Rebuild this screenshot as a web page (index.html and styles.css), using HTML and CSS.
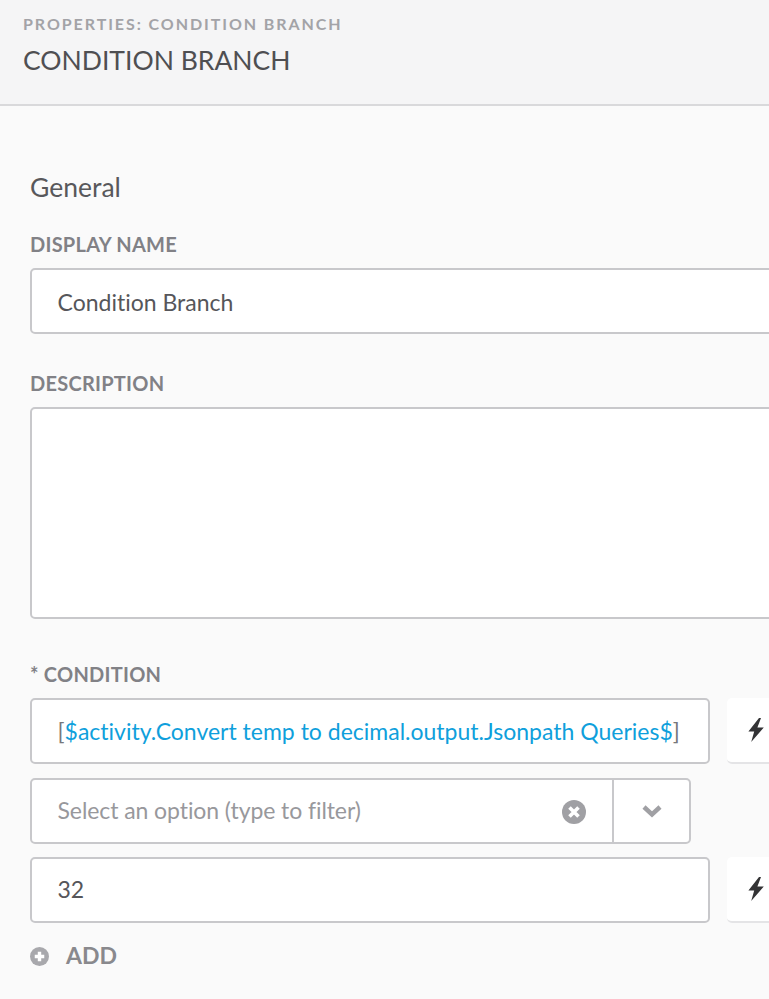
FILE: index.html
```html
<!DOCTYPE html>
<html lang="en">
<head>
<meta charset="utf-8">
<title>Properties: Condition Branch</title>
<link rel="stylesheet" href="styles.css">
</head>
<body>
<div class="panel">
  <header class="head">
    <div class="eyebrow">PROPERTIES: CONDITION BRANCH</div>
    <h1 class="title">CONDITION BRANCH</h1>
  </header>
  <main class="form">
    <h2 class="section">General</h2>
    <div class="label label-first">DISPLAY NAME</div>
    <div class="field field-full field-name"><span class="value">Condition Branch</span></div>
    <div class="label label-desc">DESCRIPTION</div>
    <div class="field field-full field-area"></div>
    <div class="label label-cond">* CONDITION</div>
    <div class="row row-first">
      <div class="field field-main"><span class="value"><span class="bracket">[</span><span class="token">$activity.Convert temp to decimal.output.Jsonpath Queries$</span><span class="bracket">]</span></span></div>
      <button class="bolt" type="button" aria-label="Expression"><svg class="bolt-icon" viewBox="0 0 16 24"><path d="M11 0 0.4 13.6h5.8L3.2 24 15.8 9.4H9.4L13 0z"/></svg></button>
    </div>
    <div class="select">
      <span class="placeholder">Select an option (type to filter)</span>
      <svg class="clear" viewBox="0 0 24 24"><circle cx="12" cy="12" r="12"/><path class="clear-x" d="M7.5 7.5 16.5 16.5M16.5 7.5 7.5 16.5"/></svg>
      <span class="caret"><svg class="caret-icon" viewBox="0 0 20 14"><path d="M2 3 10 10.5 18 3"/></svg></span>
    </div>
    <div class="row">
      <div class="field field-main field-num"><span class="value">32</span></div>
      <button class="bolt" type="button" aria-label="Expression"><svg class="bolt-icon" viewBox="0 0 16 24"><path d="M11 0 0.4 13.6h5.8L3.2 24 15.8 9.4H9.4L13 0z"/></svg></button>
    </div>
    <div class="add">
      <svg class="add-icon" viewBox="0 0 20 20"><circle cx="10" cy="10" r="10"/><path class="add-plus" d="M10 5v10M5 10h10"/></svg>
      <span>ADD</span>
    </div>
  </main>
</div>
</body>
</html>
```
FILE: styles.css
```css
* { box-sizing: border-box; }
html, body { margin: 0; padding: 0; height: 100%; overflow: hidden; background: #fafafa; }
body { font-family: Lato, "Open Sans", sans-serif; color: #4f4f52; font-variant-ligatures: none; }
.panel { width: 800px; }
.head { height: 106px; background: #f5f5f6; border-bottom: 2px solid #d9d9db; padding: 14px 0 0 23px; }
.eyebrow { font-size: 16px; line-height: 20px; font-weight: 700; letter-spacing: 1.93px; color: #a3a3a7; }
.title { margin: 6px 0 0; font-size: 26.5px; line-height: 40px; font-weight: 400; color: #4f4f52; }
.form { padding: 0 0 0 30px; }
.section { margin: 63px 0 0; font-size: 26.5px; line-height: 36px; font-weight: 400; color: #58585b; }
.label { font-size: 20px; line-height: 24px; font-weight: 700; letter-spacing: 0.25px; color: #818186; }
.label-first { margin-top: 27px; }
.label-desc { margin-top: 37px; }
.label-cond { margin-top: 43px; }
.field { display: flex; align-items: center; height: 66px; background: #fff; border: 2px solid #c8c8cb; border-radius: 5px; padding-left: 25.5px; margin-top: 12px; }
.field-full { width: 770px; }
.field-name { padding-top: 2px; }
.field-num { padding-bottom: 2px; }
.field-area { height: 212px; }
.field-main { width: 680px; margin-top: 0; }
.value { font-size: 23px; color: #56565a; white-space: nowrap; }
.token { color: #0f9fdc; }
.bracket { color: #77777b; }
.row { display: flex; gap: 17px; margin-top: 13px; }
.row-first { margin-top: 12px; }
.bolt { width: 60px; height: 66px; padding: 0 0 0 21px; background: #fff; border: 0; border-bottom: 2px solid #e4e4e6; border-radius: 5px; display: flex; align-items: center; justify-content: flex-start; }
.bolt-icon { width: 16px; height: 24px; fill: #333335; }
.select { display: flex; align-items: center; width: 661px; height: 66px; margin-top: 14px; background: #fff; border: 2px solid #c8c8cb; border-radius: 5px; padding-left: 25.5px; }
.placeholder { flex: 1; font-size: 23px; color: #98989c; white-space: nowrap; letter-spacing: -0.08px; margin-bottom: 2px; }
.clear { width: 24px; height: 24px; margin: 2px 26px 0 0; fill: #a0a0a4; }
.clear-x { fill: none; stroke: #fff; stroke-width: 3.6; }
.caret { display: flex; align-items: center; justify-content: center; width: 77px; height: 100%; border-left: 2px solid #c8c8cb; }
.caret-icon { width: 20px; height: 14px; fill: none; stroke: #a0a0a4; stroke-width: 4.5; }
.add { display: flex; align-items: center; gap: 17px; margin-top: 14px; font-size: 23px; line-height: 36px; font-weight: 700; color: #89898d; }
.add-icon { width: 19px; height: 19px; margin-top: 2px; fill: #a8a8ac; }
.add-plus { fill: none; stroke: #fff; stroke-width: 3.6; }
```
